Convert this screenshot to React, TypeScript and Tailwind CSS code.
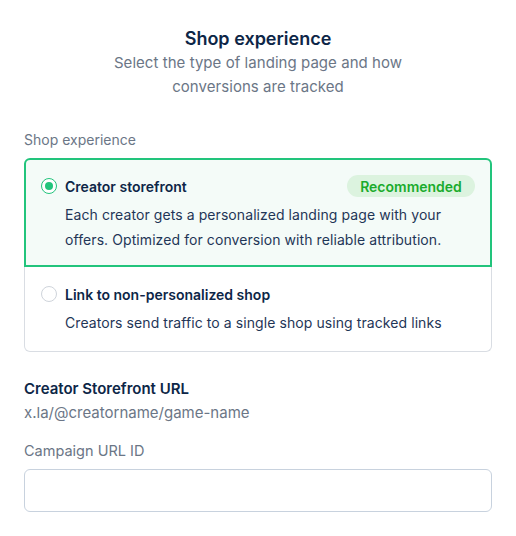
import React from 'react';

export default function App() {
  return (
    <div className="w-[516px] min-h-[536px] bg-white px-6 pt-[27px] text-[#0f2747]" style={{ fontFamily: 'Inter, "Noto Sans", sans-serif' }}>
      {/* Header */}
      <div className="flex flex-col items-center text-center">
        <h1 className="text-[18px] leading-6 font-semibold text-[#0d2647]">Shop experience</h1>
        <p className="text-[15px] leading-6 text-[#6b7686] w-[310px] tracking-[0.05px]">
          Select the type of landing page and how conversions are tracked
        </p>
      </div>

      {/* Shop experience options */}
      <div className="mt-[31px] text-[14px] leading-5 text-[#6b7686]">Shop experience</div>
      <div className="mt-2 flex flex-col">
        <div className="rounded-t-md border-2 border-[#22c47c] bg-[#f4fbf8] pl-[15px] pr-[15px] pt-[15px] pb-[13px]">
          <div className="flex h-[22px] items-center justify-between">
            <div className="flex items-center gap-2">
              <span className="flex h-4 w-4 items-center justify-center rounded-full border-[1.5px] border-[#22c47c] bg-white">
                <span className="h-2 w-2 rounded-full bg-[#22c47c]" />
              </span>
              <span className="text-[14px] font-semibold text-[#0d2647]">Creator storefront</span>
            </div>
            <span className="flex h-[22px] w-[128px] items-center justify-center rounded-full bg-[#dcf3df] text-[14px] font-semibold text-[#1aab2c]">
              Recommended
            </span>
          </div>
          <p className="mt-[5px] pl-6 text-[14px] leading-[25px] tracking-[0.08px] text-[#1f3657]">
            Each creator gets a personalized landing page with your offers. Optimized for conversion with reliable attribution.
          </p>
        </div>
        <div className="rounded-b-md border border-t-0 border-[#d9dde3] bg-white pl-4 pr-4 pt-[16px] pb-[16px]">
          <div className="flex h-[22px] items-center gap-2">
            <span className="h-4 w-4 rounded-full border border-[#cfd4db] bg-white" />
            <span className="text-[14px] font-semibold text-[#0d2647]">Link to non-personalized shop</span>
          </div>
          <p className="mt-[6px] pl-6 text-[14px] leading-6 tracking-[0.08px] text-[#1f3657]">
            Creators send traffic to a single shop using tracked links
          </p>
        </div>
      </div>

      {/* Storefront URL */}
      <div className="mt-[25px] text-[15px] leading-6 font-semibold text-[#0d2647]">Creator Storefront URL</div>
      <div className="text-[15px] leading-6 text-[#6b7686]">x.la/@creatorname/game-name</div>

      <div className="mt-[14px] text-[14.5px] leading-6 text-[#6b7686]">Campaign URL ID</div>
      <input
        type="text"
        className="mt-[6px] block h-[43px] w-full rounded-md border border-[#c8d2de] bg-white px-3 text-[15px] outline-none"
      />
    </div>
  );
}
